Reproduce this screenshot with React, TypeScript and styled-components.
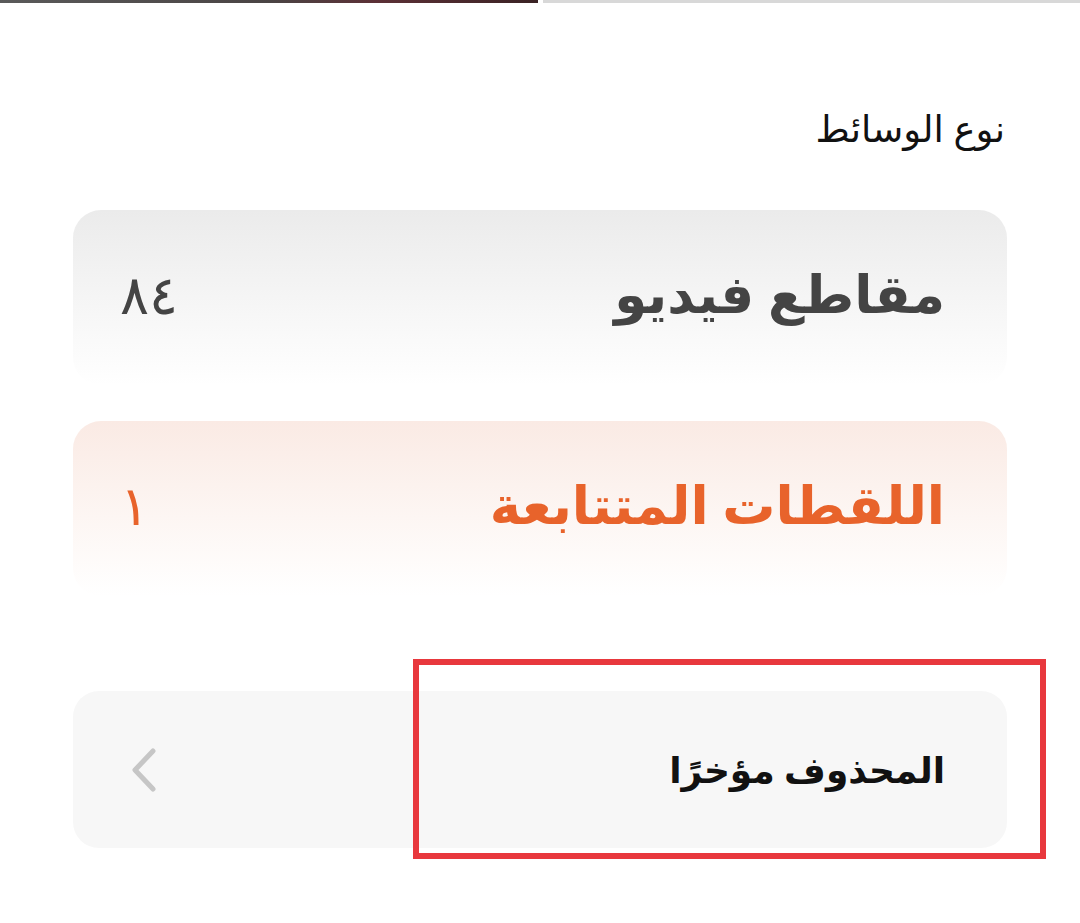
import React from 'react';
import styled, { createGlobalStyle } from 'styled-components';

const GlobalStyle = createGlobalStyle`
  html, body {
    margin: 0;
    padding: 0;
    background: #ffffff;
  }
  body {
    font-family: "Noto Sans", "DejaVu Sans", sans-serif;
  }
  * {
    box-sizing: border-box;
  }
`;

const Page = styled.div`
  width: 1080px;
  height: 923px;
  position: relative;
  background: #ffffff;
  direction: rtl;
  overflow: hidden;
`;

const TopStrip = styled.div`
  display: flex;
  direction: ltr;
  gap: 5px;
  height: 3px;
`;

const StripPart = styled.div<{ tone: string; width: number }>`
  width: ${({ width }) => width}px;
  flex-shrink: 0;
  background: ${({ tone }) => tone};
`;

const Content = styled.div`
  padding: 0 73px;
  display: flex;
  flex-direction: column;
`;

const SectionTitle = styled.h2`
  margin: 97px 2px 0 0;
  font-size: 37px;
  font-weight: 500;
  color: #111;
  line-height: 56px;
`;

const CardList = styled.div`
  margin-top: 54px;
  display: flex;
  flex-direction: column;
  gap: 36px;
`;

const MediaCard = styled.div<{ active?: boolean }>`
  height: 175px;
  border-radius: 28px;
  display: flex;
  align-items: center;
  justify-content: space-between;
  padding: 0 62px 10px 47px;
  background: ${({ active }) =>
    active
      ? 'linear-gradient(180deg, #faeae4 0%, #fdf6f3 55%, #ffffff 100%)'
      : 'linear-gradient(180deg, #ebebeb 0%, #f6f6f6 55%, #ffffff 100%)'};
  color: ${({ active }) => (active ? '#e8632b' : '#444444')};
`;

const CardLabel = styled.span`
  font-size: 53px;
  font-weight: 700;
  line-height: 1;
`;

const CardCount = styled.span`
  font-size: 54px;
  font-weight: 400;
  line-height: 1;
`;

const LinkRow = styled.div`
  margin-top: 95px;
  height: 157px;
  border-radius: 26px;
  background: #f7f7f7;
  display: flex;
  align-items: center;
  justify-content: space-between;
  padding: 0 62px 0 55px;
`;

const LinkLabel = styled.span`
  font-size: 36px;
  font-weight: 700;
  color: #111;
`;

const Chevron = styled.svg`
  width: 30px;
  height: 50px;
`;

const Highlight = styled.div`
  position: absolute;
  left: 413px;
  top: 659px;
  width: 633px;
  height: 200px;
  border: 6px solid #e8383d;
  pointer-events: none;
`;

export default function App() {
  return (
    <>
      <GlobalStyle />
      <Page>
        <TopStrip>
          <StripPart tone="linear-gradient(90deg, #5a5a5a 0%, #4a4444 50%, #5c3036 70%, #3a2224 100%)" width={538} />
          <StripPart tone="#d8d8d8" width={537} />
        </TopStrip>
        <Content>
          <SectionTitle>نوع الوسائط</SectionTitle>
          <CardList>
            <MediaCard>
              <CardLabel>مقاطع فيديو</CardLabel>
              <CardCount>٨٤</CardCount>
            </MediaCard>
            <MediaCard active>
              <CardLabel>اللقطات المتتابعة</CardLabel>
              <CardCount>١</CardCount>
            </MediaCard>
          </CardList>
          <LinkRow>
            <LinkLabel>المحذوف مؤخرًا</LinkLabel>
            <Chevron viewBox="0 0 30 50">
              <path d="M25 6 L7 25 L25 44" fill="none" stroke="#c6c6c6" strokeWidth="5" strokeLinecap="round" strokeLinejoin="round" />
            </Chevron>
          </LinkRow>
        </Content>
        <Highlight />
      </Page>
    </>
  );
}
